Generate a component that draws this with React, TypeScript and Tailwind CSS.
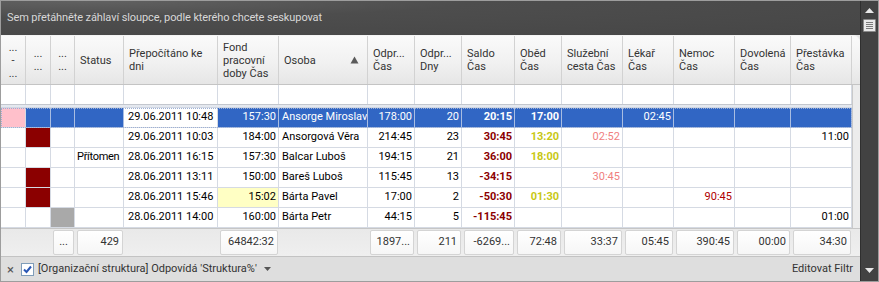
import React from "react";

const COLS =
  "grid grid-cols-[25px_25px_24px_49px_94px_61px_89px_47px_47px_53px_47px_61px_51px_61px_56px_61px]";

type C = { t?: string; bg?: string; c?: string; r?: boolean; b?: boolean; n?: boolean };

const DR = "bg-[#8b0000]";
const GR = "bg-[#a9a9a9]";
const PK = "bg-[#ffc0cb]";
const SALDO = "text-[#8b0000]";
const OBED = "text-[#c8c814]";
const SLUZ = "text-[#f08080]";
const NEM = "text-[#b00000]";

const rows: C[][] = [
  [
    { bg: PK },
    {},
    {},
    {},
    { t: "29.06.2011 10:48", n: true },
    { t: "157:30", r: true },
    { t: "Ansorge Miroslav" },
    { t: "178:00", r: true },
    { t: "20", r: true },
    { t: "20:15", r: true, b: true },
    { t: "17:00", r: true, b: true },
    {},
    { t: "02:45", r: true },
    {},
    {},
    {},
  ],
  [
    {},
    { bg: DR },
    {},
    {},
    { t: "29.06.2011 10:03", n: true },
    { t: "184:00", r: true },
    { t: "Ansorgová Věra" },
    { t: "214:45", r: true },
    { t: "23", r: true },
    { t: "30:45", r: true, b: true, c: SALDO },
    { t: "13:20", r: true, b: true, c: OBED },
    { t: "02:52", r: true, c: SLUZ },
    {},
    {},
    {},
    { t: "11:00", r: true },
  ],
  [
    {},
    {},
    {},
    { t: "Přítomen" },
    { t: "28.06.2011 16:15", n: true },
    { t: "157:30", r: true },
    { t: "Balcar Luboš" },
    { t: "194:15", r: true },
    { t: "21", r: true },
    { t: "36:00", r: true, b: true, c: SALDO },
    { t: "18:00", r: true, b: true, c: OBED },
    {},
    {},
    {},
    {},
    {},
  ],
  [
    {},
    { bg: DR },
    {},
    {},
    { t: "28.06.2011 13:11", n: true },
    { t: "150:00", r: true },
    { t: "Bareš Luboš" },
    { t: "115:45", r: true },
    { t: "13", r: true },
    { t: "-34:15", r: true, b: true, c: SALDO },
    {},
    { t: "30:45", r: true, c: SLUZ },
    {},
    {},
    {},
    {},
  ],
  [
    {},
    { bg: DR },
    {},
    {},
    { t: "28.06.2011 15:46", n: true },
    { t: "15:02", r: true, bg: "bg-[#ffffc4]" },
    { t: "Bárta Pavel" },
    { t: "17:00", r: true },
    { t: "2", r: true },
    { t: "-50:30", r: true, b: true, c: SALDO },
    { t: "01:30", r: true, b: true, c: OBED },
    {},
    {},
    { t: "90:45", r: true, c: NEM },
    {},
    {},
  ],
  [
    {},
    {},
    { bg: GR },
    {},
    { t: "28.06.2011 14:00", n: true },
    { t: "160:00", r: true },
    { t: "Bárta Petr" },
    { t: "44:15", r: true },
    { t: "5", r: true },
    { t: "-115:45", r: true, b: true, c: SALDO },
    {},
    {},
    {},
    {},
    {},
    { t: "01:00", r: true },
  ],
];

const headers: string[][] = [
  ["...", "-", "..."],
  ["...", "..."],
  ["...", "..."],
  ["Status"],
  ["Přepočítáno ke", "dni"],
  ["Fond", "pracovní", "doby Čas"],
  ["Osoba"],
  ["Odpr...", "Čas"],
  ["Odpr...", "Dny"],
  ["Saldo", "Čas"],
  ["Oběd", "Čas"],
  ["Služební", "cesta Čas"],
  ["Lékař", "Čas"],
  ["Nemoc", "Čas"],
  ["Dovolená", "Čas"],
  ["Přestávka", "Čas"],
];

const summary: (string | null)[] = [
  null,
  null,
  "...",
  "429",
  null,
  "64842:32",
  null,
  "1897...",
  "211",
  "-6269...",
  "72:48",
  "33:37",
  "05:45",
  "390:45",
  "00:00",
  "34:30",
];

function Header() {
  return (
    <div className="flex h-[50px] rounded-tr-[7px] border-b border-t border-[#c4c4c4] border-t-[#f4f4f4] bg-[linear-gradient(#fafafa,#f1f1f1_55%,#e6e6e6)]">
      <div className={COLS}>
        {headers.map((h, i) => (
          <div
            key={i}
            className={`flex items-center border-r border-[#d2d2d2] ${
              i < 3 ? "justify-center" : "pl-[5px] pr-[2px]"
            }`}
          >
            <div
              className={`flex-1 leading-[13px] text-[#333] ${
                i < 3 ? "text-center" : ""
              }`}
            >
              {h.map((l, j) => (
                <div key={j} className="h-[13px] whitespace-nowrap">
                  {l}
                </div>
              ))}
            </div>
            {i === 6 && (
              <svg width="9" height="8" viewBox="0 0 9 8" className="mr-[6px]">
                <path d="M4.5 0.5 L8.5 7.5 L0.5 7.5 Z" fill="#5a5a5a" />
              </svg>
            )}
          </div>
        ))}
      </div>
      <div className="flex-1" />
    </div>
  );
}

function Body() {
  return (
    <div className="flex">
      <div className="w-[851px] bg-white">
        <div className={`${COLS} h-[20px] border-b border-[#c3c7ce]`}>
          {headers.map((_, i) => (
            <div key={i} className="border-r border-[#d5dae3]" />
          ))}
        </div>
        <div className="h-[3px] border-b border-[#cfd6e3] bg-[#e4e8ef]" />
        {rows.map((row, ri) => {
          const sel = ri === 0;
          return (
            <div
              key={ri}
              className={`${COLS} h-[20px] ${
                sel
                  ? "outline-1 outline-dotted outline-[#9db0d4] -outline-offset-1"
                  : ""
              }`}
            >
              {row.map((cell, ci) => {
                const isFocus = sel && ci === 4;
                let bg = cell.bg ?? "";
                let color = cell.c ?? "text-black";
                let border = "border-[#d5dae3]";
                if (sel && !cell.bg) {
                  if (isFocus) {
                    bg = "bg-white";
                  } else {
                    bg = "bg-[#3166c4]";
                    color = "text-white";
                    border = "border-[#a9bde2]";
                  }
                }
                return (
                  <div
                    key={ci}
                    className={`flex items-center overflow-hidden whitespace-nowrap border-r border-b ${border} ${bg} ${color} ${
                      cell.r
                        ? "justify-end pr-[2px]"
                        : ci === 3
                        ? "pl-[2px] tracking-[-0.3px]"
                        : cell.n
                        ? "pl-[4px]"
                        : "pl-[3px]"
                    } ${cell.b ? "font-bold" : ""}`}
                  >
                    {cell.t}
                  </div>
                );
              })}
            </div>
          );
        })}
      </div>
      <div className="w-[8px] border-l border-[#c9c9c9] bg-[#ececec]" />
    </div>
  );
}

function Summary() {
  return (
    <div className="flex h-[28px] border-t border-[#c6c6c6] bg-[linear-gradient(#e9e9e9,#efefef)]">
      <div className={`${COLS} h-full`}>
        {summary.map((s, i) => (
          <div key={i} className="flex items-center pl-[2px] pr-[1px]">
            {s !== null && (
              <div
                className={`flex h-[25px] w-full items-center rounded-[2px] border border-[#d4d4d4] bg-[linear-gradient(#ffffff,#f6f6f6)] text-[#333] ${
                  i === 2 ? "justify-center" : "justify-end pr-[3px]"
                }`}
              >
                {s}
              </div>
            )}
          </div>
        ))}
      </div>
      <div className="flex-1" />
    </div>
  );
}

function FilterBar() {
  return (
    <div className="flex h-[25px] items-center border-t border-[#c3c3c3] bg-[#dedede] pl-[6px] pr-[7px] text-[#333]">
      <span className="text-[13px] leading-none text-[#555]">×</span>
      <div className="ml-[7px] flex h-[13px] w-[13px] items-center justify-center border border-[#7f9db9] bg-white">
        <svg width="9" height="9" viewBox="0 0 9 9">
          <path d="M1 4.5 L3.5 7 L8 1.5" stroke="#2a57b5" strokeWidth="2" fill="none" />
        </svg>
      </div>
      <span className="ml-[4px]">[Organizační struktura] Odpovídá 'Struktura%'</span>
      <svg width="7" height="4" viewBox="0 0 7 4" className="ml-[7px]">
        <path d="M0 0 L7 0 L3.5 4 Z" fill="#555" />
      </svg>
      <div className="flex-1" />
      <span>Editovat Filtr</span>
    </div>
  );
}

function ScrollBar() {
  return (
    <div className="flex w-[18px] flex-col items-center border-l border-[#2f2f2f] bg-[#424242]">
      <svg width="9" height="5" viewBox="0 0 9 5" className="mt-[7px] shrink-0">
        <path d="M4.5 0 L9 5 L0 5 Z" fill="#e8e8e8" />
      </svg>
      <div className="mt-[6px] flex h-[13px] w-[13px] shrink-0 flex-col items-center justify-center gap-[1px] rounded-[1px] border border-[#8a8a8a] bg-[#e9e9e9]">
        <div className="h-px w-[7px] bg-[#7a7a7a]" />
        <div className="h-px w-[7px] bg-[#7a7a7a]" />
        <div className="h-px w-[7px] bg-[#7a7a7a]" />
        <div className="h-px w-[7px] bg-[#7a7a7a]" />
      </div>
      <div className="flex-1" />
      <svg width="9" height="5" viewBox="0 0 9 5" className="mb-[8px] shrink-0">
        <path d="M0 0 L9 0 L4.5 5 Z" fill="#e8e8e8" />
      </svg>
    </div>
  );
}

export default function App() {
  return (
    <div className="flex h-[282px] w-[879px] border border-[#9d9d9d] bg-[#e4e4e4] font-['Roboto',sans-serif] text-[11px]">
      <div className="flex w-[859px] flex-col">
        <div className="flex h-[34px] items-center bg-[radial-gradient(ellipse_at_10%_0%,#616161_0%,#4d4d4d_35%,#464646_100%)] pl-[6px] tracking-[-0.1px] text-[#d8d8d8]">
          Sem přetáhněte záhlaví sloupce, podle kterého chcete seskupovat
        </div>
        <Header />
        <Body />
        <div className="flex-1 bg-white" />
        <Summary />
        <FilterBar />
      </div>
      <ScrollBar />
    </div>
  );
}
